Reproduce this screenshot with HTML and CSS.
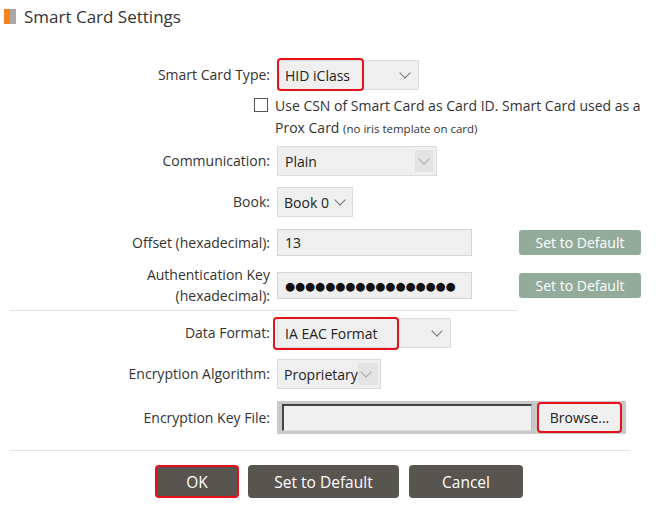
FILE: index.html
```html
<!DOCTYPE html>
<html>
<head>
<meta charset="utf-8">
<link rel="stylesheet" href="styles.css">
</head>
<body>
<div class="page">
  <div class="title">
    <span class="title-mark"><span class="mark-o"></span><span class="mark-g"></span></span>
    <span class="title-text">Smart Card Settings</span>
  </div>

  <div class="row r-type">
    <label class="lbl">Smart Card Type:</label>
    <div class="ctl">
      <div class="select w142"><span class="val">HID iClass</span><span class="arrow"></span></div>
      <span class="hl hl-type"></span>
    </div>
  </div>

  <div class="row r-check">
    <div class="lbl"><span class="check"></span></div>
    <div class="ctl check-text">Use CSN of Smart Card as Card ID. Smart Card used as a<br>Prox Card <small>(no iris template on card)</small></div>
  </div>

  <div class="row r-comm">
    <label class="lbl">Communication:</label>
    <div class="ctl"><div class="select w160 native"><span class="val">Plain</span><span class="arrow"></span></div></div>
  </div>

  <div class="row r-book">
    <label class="lbl">Book:</label>
    <div class="ctl"><div class="select w76 tight"><span class="val">Book 0</span><span class="arrow"></span></div></div>
  </div>

  <div class="row r-offset">
    <label class="lbl">Offset (hexadecimal):</label>
    <div class="ctl ctl-btn">
      <div class="input">13</div>
      <button class="btn-soft">Set to Default</button>
    </div>
  </div>

  <div class="row r-auth">
    <label class="lbl two">Authentication Key<br>(hexadecimal):</label>
    <div class="ctl ctl-btn">
      <div class="input dots">●●●●●●●●●●●●●●●●●</div>
      <button class="btn-soft">Set to Default</button>
    </div>
  </div>

  <hr class="sep sep1">

  <div class="row r-format">
    <label class="lbl">Data Format:</label>
    <div class="ctl">
      <div class="select w174"><span class="val">IA EAC Format</span><span class="arrow"></span></div>
      <span class="hl hl-format"></span>
    </div>
  </div>

  <div class="row r-alg">
    <label class="lbl">Encryption Algorithm:</label>
    <div class="ctl"><div class="select w104 tight native"><span class="val">Proprietary</span><span class="arrow"></span></div></div>
  </div>

  <div class="row r-file">
    <label class="lbl">Encryption Key File:</label>
    <div class="ctl">
      <div class="file">
        <div class="file-input"></div>
        <button class="browse">Browse...</button>
      </div>
    </div>
  </div>

  <hr class="sep sep2">

  <div class="actions">
    <button class="btn-dark ok">OK</button>
    <button class="btn-dark def">Set to Default</button>
    <button class="btn-dark cancel">Cancel</button>
  </div>
</div>
</body>
</html>
```

FILE: styles.css
```css
* { box-sizing: border-box; }
html, body { margin: 0; padding: 0; background: #fff; }
body {
  font-family: "Open Sans", "Noto Sans", "DejaVu Sans", sans-serif;
  font-size: 14px;
  color: #333;
  width: 658px;
  height: 514px;
  overflow: hidden;
}
.page { position: relative; }

.title {
  display: flex;
  align-items: center;
  height: 33px;
  padding-left: 4px;
}
.title-mark { display: flex; width: 12px; height: 15px; margin-right: 8px; }
.mark-o { width: 6px; background: #f5821f; }
.mark-g { width: 6px; background: #a8a8a8; }
.title-text { font-size: 17px; color: #333; }

.row {
  display: grid;
  grid-template-columns: 270px 1fr;
  column-gap: 7px;
  align-items: center;
}
.lbl { text-align: right; color: #333; line-height: 20px; }
.lbl.two { line-height: 21px; }
.ctl { position: relative; display: flex; align-items: center; }

.select {
  height: 30px;
  background: #efefef;
  border: 1px solid #dcdcdc;
  display: flex;
  align-items: center;
  justify-content: space-between;
  padding-left: 7px;
  color: #222;
}
.select .val { white-space: nowrap; }
.select .arrow {
  width: 24px;
  height: 28px;
  position: relative;
  flex: none;
}
.select .arrow::after {
  content: "";
  position: absolute;
  left: 7px;
  top: 8px;
  width: 7px;
  height: 7px;
  border-right: 1px solid #777;
  border-bottom: 1px solid #777;
  transform: rotate(45deg);
}
.select.native .arrow { background: #e3e3e3; width: 18px; height: 22px; margin-right: 3px; }
.select.native .arrow::after { left: 5px; top: 5px; border-color: #aaa; }
.select.tight { padding-left: 6px; }
.select.tight .arrow { width: 20px; }
.select.tight .arrow::after { left: 4px; }
.w142 { width: 142px; }
.w160 { width: 160px; }
.w76 { width: 76px; }
.w174 { width: 174px; }
.w104 { width: 104px; }

.hl {
  position: absolute;
  border: 2px solid #e8101a;
  border-radius: 4px;
  pointer-events: none;
}
.hl-type { left: 0; top: -2px; width: 87px; height: 33px; }
.hl-format { left: -4px; top: -1px; width: 126px; height: 33px; }

.r-type { margin-top: 27px; }
.r-check { margin-top: 5px; align-items: start; }
.check {
  display: inline-block;
  width: 14px;
  height: 14px;
  border: 1px solid #555;
  background: #fff;
  margin-right: 2px;
  margin-top: 3px;
}
.check-text { display: block; line-height: 22px; white-space: nowrap; margin-left: -2px; }
.check-text small { font-size: 11.5px; }

.r-comm { margin-top: 6px; }
.r-book { margin-top: 11px; }
.r-offset { margin-top: 12px; }
.r-auth { margin-top: 8px; }

.input {
  width: 195px;
  height: 27px;
  background: #efefef;
  border: 1px solid #d5d5d5;
  padding-left: 7px;
  display: flex;
  align-items: center;
  color: #222;
}
.input.dots { font-size: 11.5px; letter-spacing: 0; color: #111; }
.ctl-btn { gap: 47px; }
.btn-soft {
  width: 122px;
  height: 25px;
  border: none;
  border-radius: 3px;
  background: #93ab9b;
  color: #fff;
  font-family: inherit;
  font-size: 14px;
  padding: 0;
}

.sep {
  border: none;
  border-top: 1px solid #e2e2e2;
  margin: 0;
}
.sep1 { width: 507px; margin-left: 10px; margin-top: 4px; }
.r-format { margin-top: 7px; }
.r-alg { margin-top: 11px; }
.r-file { margin-top: 12px; }

.file {
  width: 349px;
  height: 33px;
  background: #c9c9c9;
  display: flex;
  align-items: center;
  padding-left: 5px;
  gap: 5px;
}
.file-input {
  width: 250px;
  height: 27px;
  background: #f0f0f0;
  border-top: 2px solid #444;
  border-left: 2px solid #444;
  border-right: 1px solid #bbb;
  border-bottom: 1px solid #ddd;
}
.browse {
  width: 85px;
  height: 31px;
  background: #f0f0f0;
  border: 2px solid #e8101a;
  border-radius: 4px;
  color: #222;
  font-family: inherit;
  font-size: 14px;
  padding: 0;
}

.sep2 { width: 620px; margin-left: 10px; margin-top: 16px; }

.actions {
  display: flex;
  margin-top: 14px;
  padding-left: 155px;
}
.btn-dark {
  height: 33px;
  border: none;
  border-radius: 4px;
  background: #58544f;
  color: #fff;
  font-family: inherit;
  font-size: 15.5px;
  padding: 0;
}
.ok { width: 84px; border: 2px solid #e8101a; }
.def { width: 151px; margin-left: 9px; }
.cancel { width: 114px; margin-left: 10px; }
```
